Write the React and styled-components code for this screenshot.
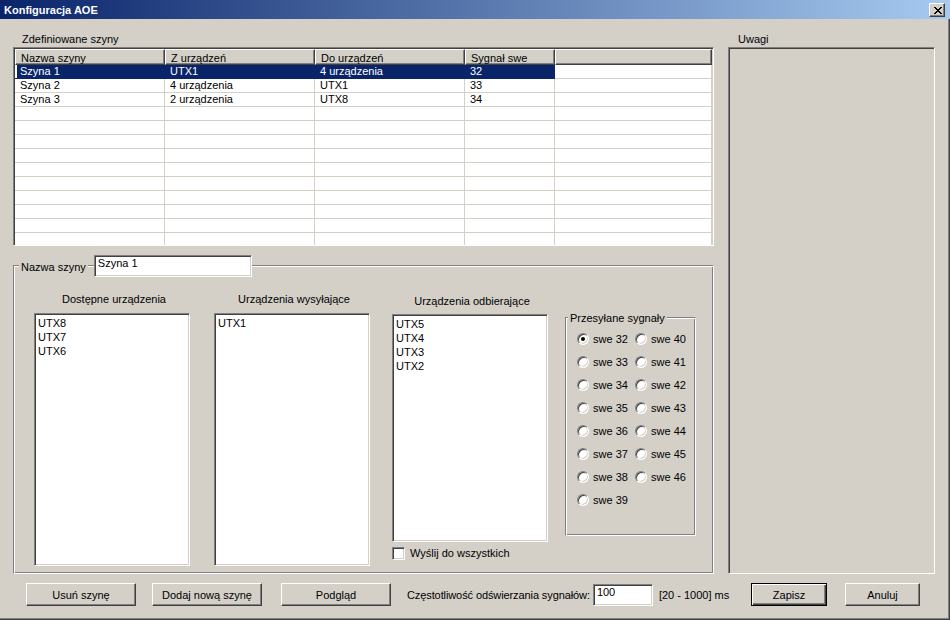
import React from 'react'
import styled, { createGlobalStyle, css } from 'styled-components'

const GlobalStyle = createGlobalStyle`
    html, body {
        margin: 0;
        padding: 0;
        background: #d4d0c8;
    }
    body {
        font-family: "Liberation Sans", Arial, sans-serif;
        font-size: 11px;
        color: #000;
    }
    * {
        box-sizing: border-box;
    }
`

// classic 3D edges
const sunken = css`
    border: 1px solid;
    border-color: #808080 #ffffff #ffffff #808080;
    box-shadow: inset 1px 1px #404040, inset -1px -1px #d4d0c8;
`

const raised = css`
    border: 1px solid;
    border-color: #ffffff #404040 #404040 #ffffff;
    box-shadow: inset -1px -1px #808080, inset 1px 1px #d4d0c8;
`

const etched = css`
    border: 1px solid;
    border-color: #808080 #ffffff #ffffff #808080;
    box-shadow: inset 1px 1px #ffffff, inset -1px -1px #808080;
`

const buses = [
    { name: 'Szyna 1', from: 'UTX1', to: '4 urządzenia', signal: '32', selected: true },
    { name: 'Szyna 2', from: '4 urządzenia', to: 'UTX1', signal: '33' },
    { name: 'Szyna 3', from: '2 urządzenia', to: 'UTX8', signal: '34' },
]

const columns = ['Nazwa szyny', 'Z urządzeń', 'Do urządzeń', 'Sygnał swe', '']

const signals = [32, 33, 34, 35, 36, 37, 38, 39, 40, 41, 42, 43, 44, 45, 46]

const CloseGlyph = () => (
    <svg width="8" height="7" viewBox="0 0 8 7" shapeRendering="crispEdges">
        <path d="M0 0h2l2 2.4L6 0h2L5 3.5 8 7H6L4 4.6 2 7H0l3-3.5z" fill="#000" />
    </svg>
)

const App = () => {
    const rows = [...buses]
    while (rows.length < 13) rows.push(null)

    return (
        <>
            <GlobalStyle />
            <Window>
                <TitleBar>
                    <span>Konfiguracja AOE</span>
                    <CloseButton><CloseGlyph /></CloseButton>
                </TitleBar>
                <Body>
                    <MainRow>
                        <LeftCol>
                            <SectionLabel $indent={9}>Zdefiniowane szyny</SectionLabel>
                            <Table>
                                <GridRow>
                                    {columns.map((c, i) => (
                                        <HeaderCell key={i}>{c}</HeaderCell>
                                    ))}
                                </GridRow>
                                {rows.map((r, i) => (
                                    <GridRow key={i}>
                                        <Cell $selected={r && r.selected} $first>{r && r.name}</Cell>
                                        <Cell $selected={r && r.selected}>{r && r.from}</Cell>
                                        <Cell $selected={r && r.selected}>{r && r.to}</Cell>
                                        <Cell $selected={r && r.selected}>{r && r.signal}</Cell>
                                        <Cell />
                                    </GridRow>
                                ))}
                            </Table>

                            <Group>
                                <Caption>
                                    <CaptionText>Nazwa szyny</CaptionText>
                                    <TextInput $width={158}>Szyna 1</TextInput>
                                </Caption>
                                <Columns>
                                    <DeviceCol $gapRight={24}>
                                        <ColTitle>Dostępne urządzenia</ColTitle>
                                        <ListBox $height={253}>
                                            <ListItem>UTX8</ListItem>
                                            <ListItem>UTX7</ListItem>
                                            <ListItem>UTX6</ListItem>
                                        </ListBox>
                                    </DeviceCol>
                                    <DeviceCol $gapRight={22}>
                                        <ColTitle>Urządzenia wysyłające</ColTitle>
                                        <ListBox $height={253}>
                                            <ListItem>UTX1</ListItem>
                                        </ListBox>
                                    </DeviceCol>
                                    <DeviceCol $offset={2}>
                                        <ColTitle $gap={6}>Urządzenia odbierające</ColTitle>
                                        <ListBox $height={228}>
                                            <ListItem>UTX5</ListItem>
                                            <ListItem>UTX4</ListItem>
                                            <ListItem>UTX3</ListItem>
                                            <ListItem>UTX2</ListItem>
                                        </ListBox>
                                        <CheckRow>
                                            <CheckBox />
                                            <span>Wyślij do wszystkich</span>
                                        </CheckRow>
                                    </DeviceCol>
                                    <SignalGroup>
                                        <SmallCaption>Przesyłane sygnały</SmallCaption>
                                        <RadioGrid>
                                            {signals.map((s) => (
                                                <RadioItem key={s}>
                                                    <Radio $checked={s === 32} />
                                                    <span>swe {s}</span>
                                                </RadioItem>
                                            ))}
                                        </RadioGrid>
                                    </SignalGroup>
                                </Columns>
                            </Group>
                        </LeftCol>

                        <RightCol>
                            <SectionLabel $indent={10}>Uwagi</SectionLabel>
                            <NotesBox />
                        </RightCol>
                    </MainRow>

                    <BottomBar>
                        <Button $width={110} $ml={13}>Usuń szynę</Button>
                        <Button $width={110} $ml={16}>Dodaj nową szynę</Button>
                        <Button $width={110} $ml={19}>Podgląd</Button>
                        <BarLabel $ml={16} $tight>Częstotliwość odświerzania sygnałów:</BarLabel>
                        <TextInput $width={60} $ml={3}>100</TextInput>
                        <BarLabel $ml={6}>[20 - 1000] ms</BarLabel>
                        <Button $width={76} $ml="auto" $default>Zapisz</Button>
                        <Button $width={75} $ml={18} $mr={15}>Anuluj</Button>
                    </BottomBar>
                </Body>
            </Window>
        </>
    )
}
export default App

/**
 * Styled components
 */
const Window = styled.div`
    width: 950px;
    height: 620px;
    background: #d4d0c8;
    display: flex;
    flex-direction: column;
    overflow: hidden;
`

const TitleBar = styled.div`
    height: 19px;
    flex: none;
    display: flex;
    align-items: center;
    justify-content: space-between;
    padding: 1px 5px 0 4px;
    background: linear-gradient(90deg, #0a246a 0%, #a6caf0 100%);
    color: #fff;
    font-weight: bold;
    font-size: 11px;
`

const CloseButton = styled.div`
    ${raised};
    width: 16px;
    height: 14px;
    background: #d4d0c8;
    display: flex;
    align-items: center;
    justify-content: center;
    padding-left: 1px;
`

const Body = styled.div`
    flex: 1;
    display: flex;
    flex-direction: column;
    padding: 14px 15px 0 13px;
    box-shadow: inset -1px -1px #404040, inset -2px -2px #808080;
`

const MainRow = styled.div`
    display: flex;
    gap: 14px;
    height: 541px;
`

const LeftCol = styled.div`
    width: 701px;
    display: flex;
    flex-direction: column;
`

const RightCol = styled.div`
    width: 207px;
    display: flex;
    flex-direction: column;
`

const SectionLabel = styled.div`
    line-height: 13px;
    padding-left: ${(p) => p.$indent}px;
    margin-bottom: 1px;
`

const Table = styled.div`
    ${sunken};
    height: 199px;
    background: #fff;
    overflow: hidden;
    padding: 1px;
`

const GridRow = styled.div`
    display: grid;
    grid-template-columns: 150px 150px 150px 90px 1fr;
`

const HeaderCell = styled.div`
    ${raised};
    height: 16px;
    background: #d4d0c8;
    padding: 2px 0 0 5px;
    line-height: 12px;
    white-space: nowrap;
`

const Cell = styled.div`
    height: 14px;
    line-height: 13px;
    padding-left: 5px;
    border-right: 1px solid #d4d0c8;
    border-bottom: 1px solid #d4d0c8;
    white-space: nowrap;
    background: ${(p) => (p.$selected ? '#0a246a' : '#fff')};
    color: ${(p) => (p.$selected ? '#fff' : '#000')};
    ${(p) => p.$selected && p.$first && css`box-shadow: inset 2px 0 #fff;`}
    ${(p) => p.$selected && css`border-bottom-color: #0a246a; border-right-color: #0a246a;`}
`

const Group = styled.div`
    ${etched};
    margin-top: 19px;
    flex: 1;
    display: flex;
    flex-direction: column;
`

const Caption = styled.div`
    display: flex;
    align-items: flex-start;
    align-self: flex-start;
    margin: -11px 0 0 5px;
`

const CaptionText = styled.span`
    background: #d4d0c8;
    padding: 0 2px;
    line-height: 13px;
    margin: 6px 6px 0 0;
`

const TextInput = styled.div`
    ${sunken};
    width: ${(p) => p.$width}px;
    height: 22px;
    margin-left: ${(p) => p.$ml || 0}px;
    background: #fff;
    padding: 1px 3px 0;
    line-height: 13px;
    flex: none;
`

const Columns = styled.div`
    display: flex;
    align-items: flex-start;
    padding-left: 20px;
    margin-top: 16px;
`

const DeviceCol = styled.div`
    width: 156px;
    margin-top: ${(p) => p.$offset || 0}px;
    margin-right: ${(p) => p.$gapRight || 0}px;
    display: flex;
    flex-direction: column;
    align-items: center;
`

const ColTitle = styled.div`
    line-height: 13px;
    margin-bottom: ${(p) => (p.$gap != null ? p.$gap : 7)}px;
    padding-left: 4px;
    white-space: nowrap;
`

const ListBox = styled.div`
    ${sunken};
    width: 156px;
    height: ${(p) => p.$height}px;
    background: #fff;
    padding: 2px 0 0 3px;
`

const ListItem = styled.div`
    line-height: 14px;
`

const CheckRow = styled.div`
    align-self: flex-start;
    display: flex;
    align-items: center;
    gap: 5px;
    margin-top: 5px;
    line-height: 13px;
`

const CheckBox = styled.div`
    ${sunken};
    width: 13px;
    height: 13px;
    background: #fff;
`

const SignalGroup = styled.div`
    ${etched};
    width: 131px;
    height: 219px;
    margin: 24px 0 0 17px;
    display: flex;
    flex-direction: column;
`

const SmallCaption = styled.div`
    align-self: flex-start;
    margin: -6px 0 0 2px;
    padding: 0 2px;
    line-height: 13px;
    background: #d4d0c8;
`

const RadioGrid = styled.div`
    display: grid;
    grid-template-columns: 58px 58px;
    grid-template-rows: repeat(8, 23px);
    grid-auto-flow: column;
    margin: 2px 0 0 11px;
`

const RadioItem = styled.div`
    display: flex;
    align-items: center;
    gap: 4px;
    white-space: nowrap;
`

const Radio = styled.div`
    width: 12px;
    height: 12px;
    border-radius: 50%;
    border: 1px solid;
    border-color: #808080 #ffffff #ffffff #808080;
    box-shadow: inset 1px 1px #404040, inset -1px -1px #d4d0c8;
    background: #fff;
    position: relative;
    flex: none;

    &::after {
        content: '';
        display: ${(p) => (p.$checked ? 'block' : 'none')};
        position: absolute;
        left: 3px;
        top: 3px;
        width: 4px;
        height: 4px;
        border-radius: 50%;
        background: #000;
    }
`

const NotesBox = styled.div`
    ${sunken};
    flex: 1;
    background: #d4d0c8;
`

const BottomBar = styled.div`
    display: flex;
    align-items: center;
    height: 23px;
    margin-top: 9px;
`

const Button = styled.div`
    ${(p) =>
        p.$default
            ? css`
                  border: 1px solid #000;
                  box-shadow: inset 1px 1px #fff, inset -1px -1px #404040, inset -2px -2px #808080;
              `
            : raised};
    width: ${(p) => p.$width}px;
    height: 23px;
    margin-left: ${(p) => (p.$ml === 'auto' ? 'auto' : `${p.$ml || 0}px`)};
    margin-right: ${(p) => p.$mr || 0}px;
    background: #d4d0c8;
    display: flex;
    align-items: center;
    justify-content: center;
    flex: none;
`

const BarLabel = styled.div`
    margin-left: ${(p) => p.$ml || 0}px;
    letter-spacing: ${(p) => (p.$tight ? '-0.1px' : 'normal')};
    white-space: nowrap;
    flex: none;
`
